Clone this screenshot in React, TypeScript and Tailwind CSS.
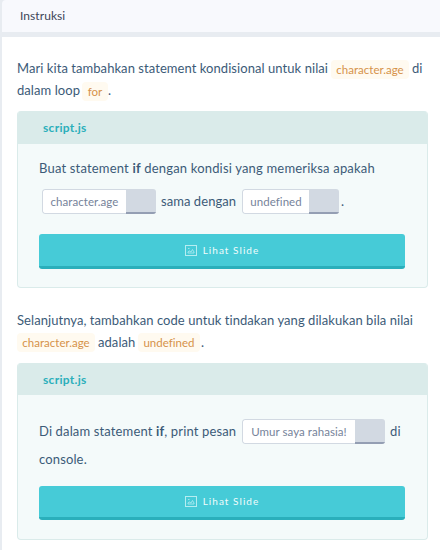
import type { ReactNode } from 'react';

function Code({ children, className = '' }: { children: ReactNode; className?: string }) {
  return (
    <code
      className={`inline-flex h-[19px] shrink-0 items-center justify-center rounded-[4px] bg-[#fffaf0] pt-px font-['Lato',sans-serif] text-[11.5px] tracking-[.01px] text-[#d6924a] ${className}`}
    >
      {children}
    </code>
  );
}

function Snippet({ children, className = '' }: { children: ReactNode; className?: string }) {
  return (
    <span className={`flex h-[25px] shrink-0 overflow-hidden rounded-[3px] text-[11.5px] tracking-[.05px] text-[#76839a] ${className}`}>
      <span className="flex flex-1 items-center justify-center rounded-l-[3px] border border-r-0 border-[#d2d9e2] bg-white pt-px">
        {children}
      </span>
      <span className="w-[30px] border-b-2 border-[#949eb3] bg-[#d2d9e2]" />
    </span>
  );
}

function SlideButton({ className = '' }: { className?: string }) {
  return (
    <button
      className={`flex w-[366px] items-center justify-center gap-[6px] rounded-[3px] border-b-[3px] border-[#2aafbb] bg-[#46cbd7] text-[10px] tracking-[1.05px] text-[#f0fcfc] ${className}`}
    >
      <svg width="12" height="11" viewBox="0 0 12 11" fill="none" stroke="#b5edf1">
        <rect x=".5" y=".5" width="11" height="10" />
        <path d="M3 8h6V7L7.5 4.5 6 7 4 5.8 3 7zM3 3.5h1.5" strokeWidth=".8" />
      </svg>
      <span>Lihat Slide</span>
    </button>
  );
}

function Card({ children, headerClass }: { children: ReactNode; headerClass: string }) {
  return (
    <section className="h-[177px] w-[411px] overflow-hidden rounded-[4px] border border-t-0 border-[#daebea] bg-[#f4fafa]">
      <header className={`flex items-center bg-[#daebea] pt-px pl-[25px] text-[12px] font-bold tracking-[.3px] text-[#2bafbb] ${headerClass}`}>
        script.js
      </header>
      <div className="pl-[21px]">{children}</div>
    </section>
  );
}

export default function App() {
  return (
    <main className="h-[550px] w-[440px] overflow-hidden bg-[#e8ecf1] pl-[2px] font-['Lato',sans-serif] text-[13px] tracking-[.06px] text-[#3c5b78]">
      <header className="flex h-8 items-center rounded-tl-[4px] bg-[#f8f9fd] pl-[18px] text-[12px] text-[#3d4658]">
        Instruksi
      </header>
      <div className="mt-[5px] h-[513px] bg-white pt-[21px] pl-[15px]">
        <div className="h-[53px] whitespace-nowrap">
          <p className="flex h-[22px] items-center">
            <span className="w-[314px]">Mari kita tambahkan statement kondisional untuk nilai</span>
            <Code className="mt-px w-[78px]">character.age</Code>
            <span className="ml-[3px]">di</span>
          </p>
          <p className="flex h-[22px] items-center">
            <span className="w-[65px]">dalam loop</span>
            <Code className="mt-px w-[26px]">for</Code>
            <span>.</span>
          </p>
        </div>
        <Card headerClass="h-[33px]">
          <p className="mt-[14px] flex h-[22px] items-center whitespace-pre tracking-[.18px]">
            Buat statement <b>if</b> dengan kondisi yang memeriksa apakah
          </p>
          <p className="mt-[9px] flex h-[25px] items-center whitespace-nowrap">
            <Snippet className="ml-[3px] w-[114px]">character.age</Snippet>
            <span className="ml-[5px] w-[81px]">sama dengan</span>
            <Snippet className="w-[97px]">undefined</Snippet>
            <span className="ml-[2px]">.</span>
          </p>
          <SlideButton className="mt-5 h-[35px]" />
        </Card>
        <div className="mt-[22px] h-[53px] whitespace-nowrap">
          <p className="flex h-[22px] items-center">Selanjutnya, tambahkan code untuk tindakan yang dilakukan bila nilai</p>
          <p className="flex h-[22px] items-center">
            <Code className="mb-px w-[78px]">character.age</Code>
            <span className="ml-[3px] w-[40px]">adalah</span>
            <Code className="mb-px w-[62px]">undefined</Code>
            <span className="ml-px">.</span>
          </p>
        </div>
        <Card headerClass="h-8">
          <p className="mt-6 flex h-[25px] items-center whitespace-pre tracking-[.14px]">
            <span className="w-[203px]">
              Di dalam statement <b>if</b>, print pesan
            </span>
            <Snippet className="w-[143px]">Umur saya rahasia!</Snippet>
            <span className="ml-[5px]">di</span>
          </p>
          <p className="mt-[5px] flex h-[22px] items-center tracking-[.14px]">console.</p>
          <SlideButton className="mt-[15px] h-[34px]" />
        </Card>
      </div>
    </main>
  );
}
